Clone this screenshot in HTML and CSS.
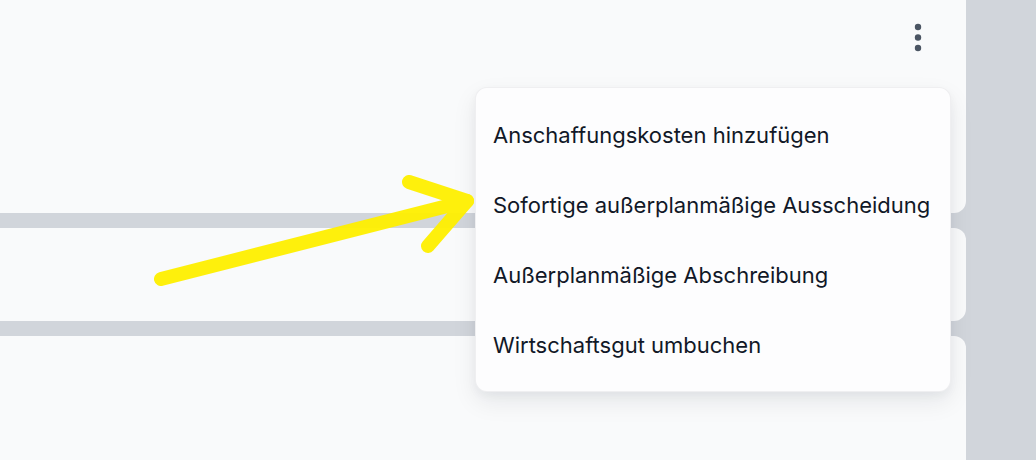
FILE: index.html
```html
<!DOCTYPE html>
<html lang="de">
<head>
<meta charset="utf-8">
<link rel="stylesheet" href="styles.css">
</head>
<body>
<div class="page">
  <div class="stack">
    <div class="card card-top">
      <button class="kebab" aria-label="Mehr">
        <svg width="8" height="29" viewBox="0 0 8 29"><circle cx="4" cy="4" r="3.2"/><circle cx="4" cy="14.5" r="3.2"/><circle cx="4" cy="25" r="3.2"/></svg>
      </button>
    </div>
    <div class="card card-mid"></div>
    <div class="card card-bottom"></div>
  </div>

  <ul class="menu">
    <li class="menu-item">Anschaffungskosten hinzufügen</li>
    <li class="menu-item">Sofortige außerplanmäßige Ausscheidung</li>
    <li class="menu-item">Außerplanmäßige Abschreibung</li>
    <li class="menu-item">Wirtschaftsgut umbuchen</li>
  </ul>

  <svg class="arrow" width="1036" height="460" viewBox="0 0 1036 460">
    <g fill="none" stroke="#fff000" stroke-width="14" stroke-linecap="round" stroke-linejoin="round">
      <path d="M161 279 L467 201"/>
      <path d="M409 182 L467 201 L428 246"/>
    </g>
  </svg>
</div>
</body>
</html>
```

FILE: styles.css
```css
* { box-sizing: border-box; }
html, body {
  margin: 0;
  padding: 0;
}
body {
  background: #d1d5db;
  font-family: Inter, "Noto Sans", sans-serif;
  width: 1036px;
  height: 460px;
  overflow: hidden;
}
.page {
  position: relative;
  display: flow-root;
  width: 1036px;
  height: 460px;
  overflow: hidden;
}
.stack {
  display: flex;
  flex-direction: column;
  gap: 15px;
  width: 966px;
  margin-top: -20px;
}
.card {
  background: #f9fafb;
  border-radius: 0 12px 12px 0;
}
.card-top {
  height: 233px;
  display: flex;
  justify-content: flex-end;
  align-items: flex-start;
  padding: 43px 44px 0 0;
}
.card-mid { height: 93px; }
.card-bottom { height: 160px; }
.kebab {
  border: 0;
  background: transparent;
  padding: 0;
  margin: 0;
  display: block;
  line-height: 0;
}
.kebab svg { fill: #4b5563; display: block; }

.menu {
  position: absolute;
  left: 475px;
  top: 87px;
  width: 476px;
  height: 305px;
  margin: 0;
  padding: 12px 0;
  list-style: none;
  background: #fdfdfe;
  border: 1px solid rgba(17, 24, 39, 0.06);
  border-radius: 12px;
  box-shadow: 0 10px 25px rgba(17, 24, 39, 0.08), 0 4px 10px rgba(17, 24, 39, 0.04);
}
.menu-item {
  height: 70px;
  display: flex;
  align-items: center;
  padding-left: 17px;
  font-size: 22px;
  color: #111827;
  white-space: nowrap;
}
.arrow {
  position: absolute;
  left: 0;
  top: 0;
  pointer-events: none;
  opacity: 0.95;
}
```
